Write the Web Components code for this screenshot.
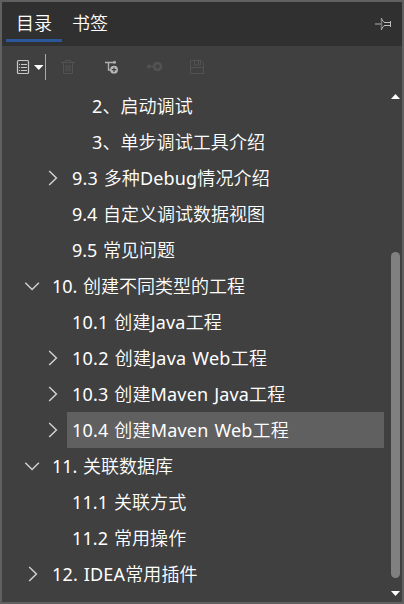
<!DOCTYPE html>
<html lang="zh-CN">
<head>
<meta charset="utf-8">
<title>目录</title>
<style>
html,body{margin:0;height:100%}
body{background:#404040;overflow:hidden;font:400 18px/36px "Noto Sans","Noto Sans CJK SC DemiLight","Noto Sans CJK SC",sans-serif;color:#fff}
</style>
</head>
<body>
<outline-panel>
  <panel-tab slot="tabs" active>目录</panel-tab>
  <panel-tab slot="tabs">书签</panel-tab>
  <tree-row indent="90" track=".08">2、启动调试</tree-row>
  <tree-row indent="90" track=".08">3、单步调试工具介绍</tree-row>
  <tree-row indent="70" state="closed" track=".15">9.3 多种Debug情况介绍</tree-row>
  <tree-row indent="70">9.4 自定义调试数据视图</tree-row>
  <tree-row indent="70">9.5 常见问题</tree-row>
  <tree-row indent="50" state="open">10. 创建不同类型的工程</tree-row>
  <tree-row indent="70" track=".18">10.1 创建Java工程</tree-row>
  <tree-row indent="70" state="closed" track=".25">10.2 创建Java Web工程</tree-row>
  <tree-row indent="70" state="closed" track=".17">10.3 创建Maven Java工程</tree-row>
  <tree-row indent="70" state="closed" selected track=".19">10.4 创建Maven Web工程</tree-row>
  <tree-row indent="50" state="open">11. 关联数据库</tree-row>
  <tree-row indent="70" track=".1">11.1 关联方式</tree-row>
  <tree-row indent="70" track=".1">11.2 常用操作</tree-row>
  <tree-row indent="50" state="closed" track=".16">12. IDEA常用插件</tree-row>
</outline-panel>
<script>
class PanelTab extends HTMLElement{
  constructor(){
    super();
    this.attachShadow({mode:'open'}).innerHTML=`<style>
      :host{display:block;box-sizing:border-box;width:56px;height:40px;padding-left:10px;line-height:43px;white-space:nowrap;border-bottom:3px solid transparent}
      :host([active]){border-color:#2b579a}
    </style><slot></slot>`;
  }
}
class TreeRow extends HTMLElement{
  constructor(){super();this.attachShadow({mode:'open'});}
  connectedCallback(){
    const indent=+this.getAttribute('indent'),state=this.getAttribute('state');
    const track=this.getAttribute('track')||0;
    const d=state==='open'?'M3.3 6.7l6.8 6.8 6.8-6.8':'M7.2 3l7.2 7-7.2 7';
    this.shadowRoot.innerHTML=`<style>
      :host{display:flex;height:36px;align-items:center;white-space:nowrap}
      .toggle{flex:none;display:flex;box-sizing:border-box;width:${indent-5}px;padding-right:5px;justify-content:flex-end}
      svg{width:20px;height:20px;fill:none;stroke:#d0d0d0;stroke-width:1.5}
      .label{flex:1;height:36px;padding-left:5px;letter-spacing:${track}px;word-spacing:1px}
      :host([selected]) .label{background:#606060}
    </style><span class="toggle">${state?`<svg viewBox="0 0 20 20"><path d="${d}"/></svg>`:''}</span><span class="label"><slot></slot></span>`;
  }
}
class ToolBar extends HTMLElement{
  constructor(){
    super();
    this.attachShadow({mode:'open'}).innerHTML=`<style>
      :host{display:flex;height:42px;align-items:center;padding-left:14px}
      svg{display:block;flex:none;fill:none;stroke:#c8c8c8}
      .off{stroke:#525252}
      .sep{width:1px;height:26px;background:#aaa;margin:0 14px 0 1px}
      .gap{width:26px}
      .gap.wide{width:28px}
    </style>
    <svg width="28" height="20"><rect x="1.5" y="3.5" width="11" height="13" rx="1" stroke-width="1.2"/><path d="M3 7.5h1M5 7.5h6M3 10.5h1M5 10.5h6M3 13.5h1M5 13.5h6"/><path d="M18 8h9.5l-4.75 5z" fill="#fff" stroke="none"/></svg>
    <span class="sep"></span>
    <svg class="off" width="16" height="20"><path d="M1 5.5h14M5.5 5V3.5h5V5M3.5 6v10.5h9V6M6 8v6.5M8 8v6.5M10 8v6.5"/></svg>
    <span class="gap wide"></span>
    <svg width="16" height="20"><path d="M1 5.5h9M4.5 6v7H7" stroke-width="1.4" stroke="#b0b0b0"/><circle cx="10.5" cy="5.3" r="1.5" fill="#b0b0b0" stroke="none"/><circle cx="10" cy="12.7" r="3.9" fill="#b8b8b8" stroke="none"/><path d="M10 10.4v4.6M7.7 12.7h4.6" stroke="#404040" stroke-width="1.2"/></svg>
    <span class="gap"></span>
    <svg class="off" width="17" height="20"><circle cx="3" cy="9.5" r="2" fill="#525252" stroke="none"/><path d="M3 9.5h4" stroke-width="1.3"/><circle cx="11.5" cy="9.5" r="4.8" fill="#525252" stroke="none"/><path d="M11.5 7v5M9 9.5h5" stroke="#404040" stroke-width="1.3"/></svg>
    <span class="gap"></span>
    <svg class="off" width="16" height="20"><path d="M1.5 3.5h11l2 2v11H1.5zM2 10.5h12M5.5 4v4h6V4M9.5 4v3"/></svg>`;
  }
}
class ScrollTrack extends HTMLElement{
  constructor(){
    super();
    this.attachShadow({mode:'open'}).innerHTML=`<style>
      :host{display:flex;flex-direction:column;width:9px;padding:6px 0 6px;box-sizing:border-box;justify-content:space-between;height:514px}
      svg{display:block;flex:none;fill:#fff}
      .thumb{height:326px;border-radius:4.5px;background:#808080;margin:153px 0 13px}
    </style>
    <svg width="9" height="5"><path d="M4.5 0L9 5H0z"/></svg><div class="thumb"></div><svg width="9" height="5"><path d="M0 0h9L4.5 5z"/></svg>`;
  }
}
class OutlinePanel extends HTMLElement{
  constructor(){
    super();
    this.attachShadow({mode:'open'}).innerHTML=`<style>
      :host{display:flex;flex-direction:column;box-sizing:border-box;width:404px;height:604px;border:2px solid #606060;background:#404040}
      header{display:flex;flex:none;height:44px;background:#303030;padding:0 10px 0 4px;box-sizing:border-box}
      .pin{margin:15px 0 0 auto}
      main{display:grid;grid-template-columns:382px 9px;column-gap:7px}
    </style>
    <header><slot name="tabs"></slot>
      <svg class="pin" width="17" height="14" fill="none" stroke="#bbb"><path d="M0 7h6" stroke="#707070" stroke-width="2"/><path d="M6.5 1v12" stroke="#777" stroke-width="1.5"/><path d="M6.5 1.5c.7 2 1.8 3.2 3.2 4M6.5 12.5c.7-2 1.8-3.2 3.2-4M9 5.5h6.5M9 8.5h6.5M15.5 4v6"/></svg>
    </header>
    <tool-bar></tool-bar>
    <main><div><slot></slot></div><scroll-track></scroll-track></main>`;
  }
}
customElements.define('panel-tab',PanelTab);
customElements.define('tree-row',TreeRow);
customElements.define('tool-bar',ToolBar);
customElements.define('scroll-track',ScrollTrack);
customElements.define('outline-panel',OutlinePanel);
</script>
</body>
</html>
